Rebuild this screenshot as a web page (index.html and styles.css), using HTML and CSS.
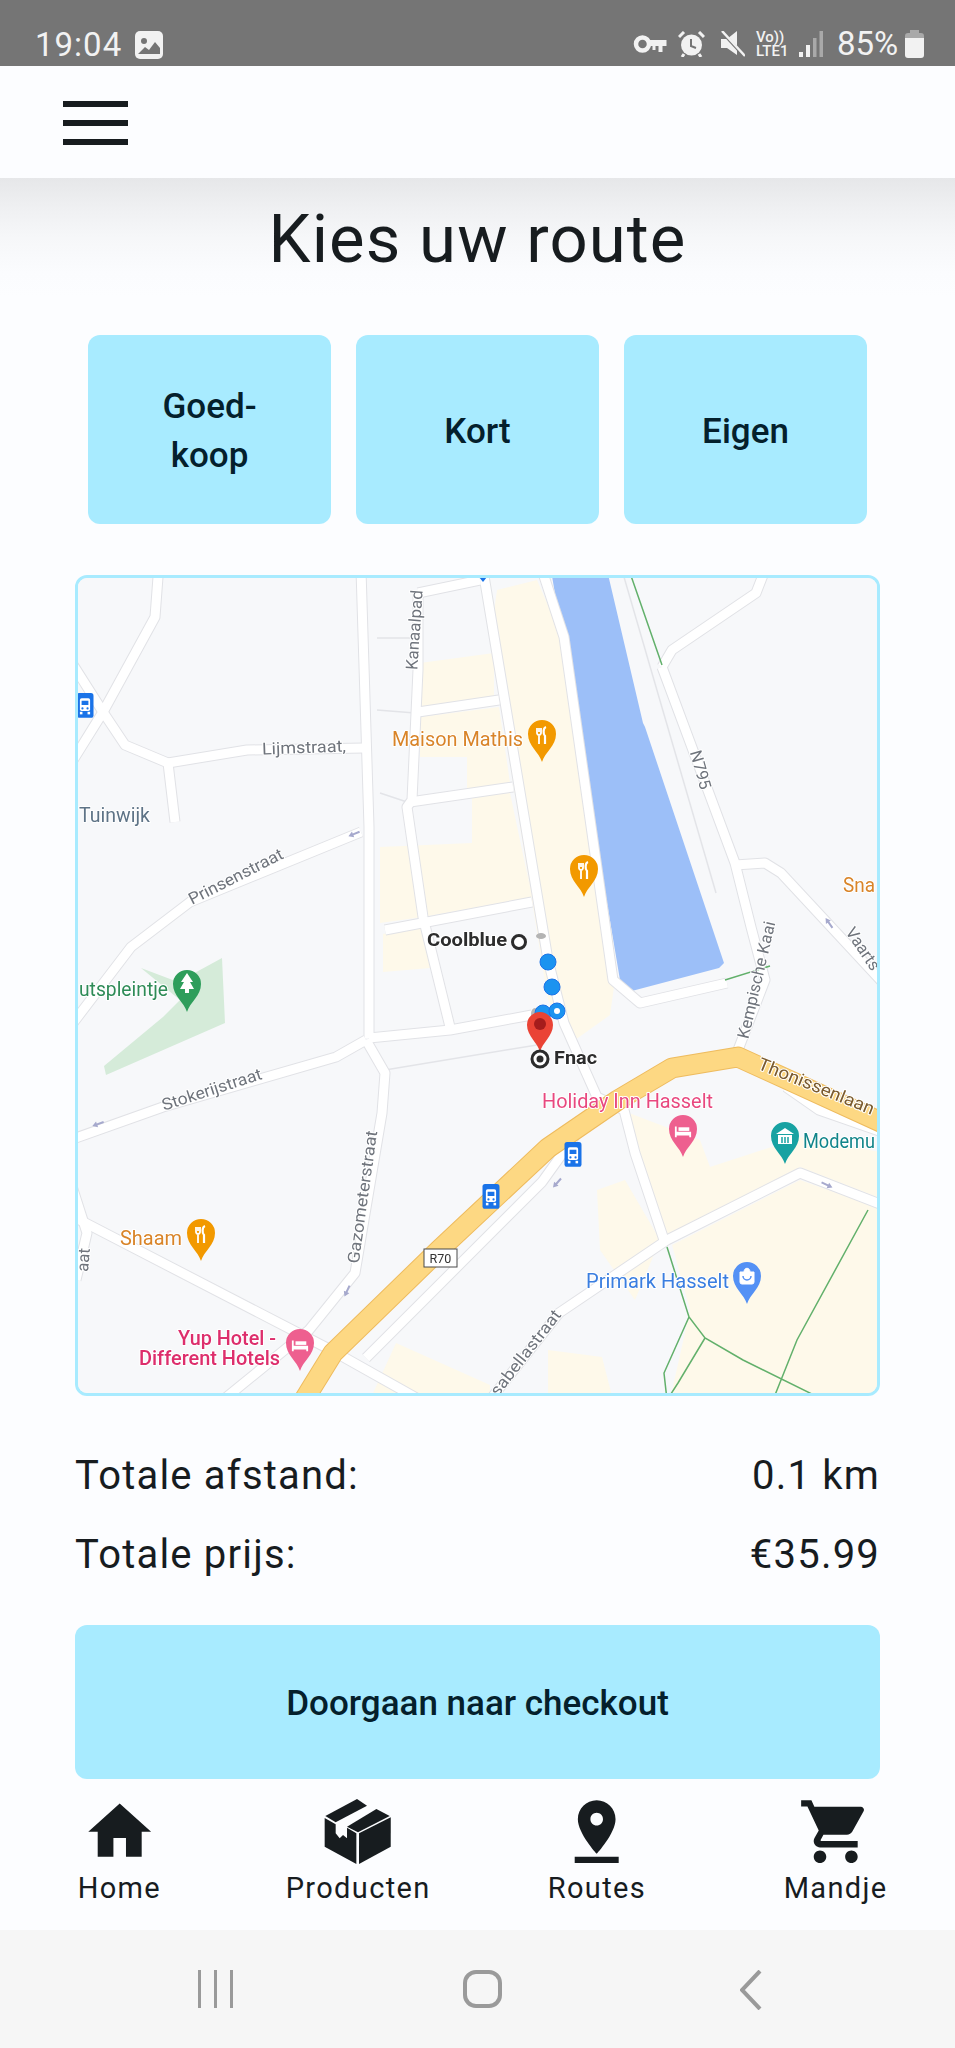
FILE: index.html
```html
<!DOCTYPE html>
<html lang="nl">
<head>
<meta charset="utf-8">
<title>Kies uw route</title>
<link rel="stylesheet" href="styles.css">
</head>
<body>
<div class="phone">
  <header class="status">
    <div class="status-left">
      <span class="clock">19:04</span>
      <svg class="st-img" viewBox="0 0 28 28"><rect width="28" height="28" rx="5" fill="#f2f2f2"/><circle cx="9" cy="10" r="3" fill="#757575"/><path d="M3 23l7-7 4 3 6-8 5 6v6z" fill="#757575"/></svg>
    </div>
    <div class="status-right">
      <svg class="st-key" viewBox="0 0 33 18"><circle cx="9" cy="9" r="6.500" fill="none" stroke="#f2f2f2" stroke-width="4.500"/><path d="M14 5h19v6h-4v6h-4v-6h-3v4h-3v-4h-5z" fill="#f2f2f2"/></svg>
      <svg class="st-alarm" viewBox="0 0 27 26"><circle cx="13.500" cy="14" r="10.500" fill="#f2f2f2"/><path d="M13 8v7l5 2" fill="none" stroke="#757575" stroke-width="2"/><path d="M1 6l5-5M26 6l-5-5M6 23l-2 3M21 23l2 3" stroke="#f2f2f2" stroke-width="3"/></svg>
      <svg class="st-mute" viewBox="0 0 25 26"><path d="M1 8h6l10-8v24l-10-7H1z" fill="#f2f2f2"/><path d="M1 0l23 25" stroke="#757575" stroke-width="3"/><path d="M2 0l23 25" stroke="#f2f2f2" stroke-width="2.500"/></svg>
      <div class="st-net"><span>Vo))</span><span>LTE1</span></div>
      <svg class="st-signal" viewBox="0 0 24 26"><rect x="0" y="21" width="4" height="5" fill="#f2f2f2"/><rect x="7" y="14" width="4" height="12" fill="#f2f2f2"/><rect x="14" y="7" width="3.500" height="19" fill="#a9a9a9"/><rect x="20.500" y="0" width="3.500" height="26" fill="#a9a9a9"/></svg>
      <span class="battery-pct">85%</span>
      <svg class="st-batt" viewBox="0 0 19 28"><path d="M5 0h9v3h2a3 3 0 013 3v3H0V6a3 3 0 013-3h2z" fill="#a9a9a9"/><path d="M0 8h19v17a3 3 0 01-3 3H3a3 3 0 01-3-3z" fill="#f2f2f2"/></svg>
    </div>
  </header>

  <div class="appbar">
    <button class="menu" aria-label="Menu"><i></i><i></i><i></i></button>
  </div>

  <main class="content">
    <h1 class="title">Kies uw route</h1>

    <div class="choices">
      <button class="choice">Goed-<br>koop</button>
      <button class="choice">Kort</button>
      <button class="choice">Eigen</button>
    </div>

    <div class="map">
      <svg class="map-svg" viewBox="78 578 799 815" preserveAspectRatio="none">
        <defs>
          <path id="pin" d="M0 42C-3 32-14 26-14 14A14 14 0 1 1 14 14C14 26 3 32 0 42Z"/>
          <g id="fork" fill="none" stroke="#fff" stroke-width="1.800"><path d="M-4-5v5a2 2 0 002 2v9M-2-5v4M0-5v5a2 2 0 01-2 2"/><path d="M5-6c-3 1-3 7-1 9v8" stroke-width="2.200"/></g>
          <g id="bed" fill="#fff"><path d="M-9 8V-4h2v6H9v6H7V6H-7v2z"/><rect x="-5" y="-3" width="12" height="4"/></g>
          <g id="bus"><rect x="-10" y="-14" width="20" height="29" rx="3" fill="#1a73e8"/><rect x="-6" y="-8" width="12" height="15" rx="2" fill="#fff"/><rect x="-4" y="-5" width="8" height="5" fill="#1a73e8"/><circle cx="-3" cy="4" r="1.300" fill="#1a73e8"/><circle cx="3" cy="4" r="1.300" fill="#1a73e8"/><rect x="-6" y="8" width="3" height="3" fill="#fff"/><rect x="3" y="8" width="3" height="3" fill="#fff"/></g>
          <path id="arr" d="M-6 0l5-3v2h7v2h-7v2z" fill="#a6a9cd"/>
          <g id="roads">
            <path d="M158 577L155 617L103 712L70 765"/>
            <path d="M70 660L103 712L125 745L168 763L175 822"/>
            <path d="M168 763L247 750L364 748"/>
            <path d="M361 570L369 827L369 1038"/>
            <path d="M361 832L190 902L131 947L70 1027"/>
            <path d="M418 593L418 670L412 800L407 807L423 917L450 1027"/>
            <path d="M418 593L480 580"/>
            <path d="M418 712L499 700"/>
            <path d="M410 802L513 787"/>
            <path d="M385 930L532 902"/>
            <path d="M483 570L548 960L564 1023L597 1097L624 1110L635 1153L664 1240"/>
            <path d="M542 570L564 637L613 980L640 1003L727 983"/>
            <path d="M662 667L735 863L751 927L765 980L738 1050"/>
            <path d="M765 570L756 593L672 650L662 667"/>
            <path d="M735 865L765 863L781 873L885 985"/>
            <path d="M369 1038L450 1030L532 1015"/>
            <path d="M70 1140L163 1107L336 1057L366 1040"/>
            <path d="M366 1040L385 1073L382 1113L355 1273L309 1330L223 1400"/>
            <path d="M70 1215L331 1350L420 1400"/>
            <path d="M70 1180L87 1233L76 1280"/>
            <path d="M366 1358L542 1182L575 1136"/>
            <path d="M490 1400L559 1313L667 1240L800 1173L885 1206"/>
            <path d="M786 1087L819 1110L885 1133"/>
          </g>
        </defs>

        <rect class="m-land" x="70" y="570" width="820" height="830"/>

        <path class="m-built" d="M497 590L537 580L563 640L615 980L610 1015L575 1040L548 1000L490 640Z"/>
        <path class="m-built" d="M420 663L494 653L494 697L420 707Z"/>
        <path class="m-built" d="M420 717L499 707L510 783L467 790L467 757L420 757Z"/>
        <path class="m-built" d="M380 847L472 843L472 795L510 793L532 897L423 917L380 923Z"/>
        <path class="m-built" d="M383 934L425 925L430 968L383 972Z"/>
        <path class="m-built" d="M629 1113L700 1140L710 1167L802 1137L885 1153L885 1200L800 1167L664 1237L634 1153Z"/>
        <path class="m-built" d="M672 1245L800 1180L885 1210L885 1400L670 1400L690 1310Z"/>
        <path class="m-built" d="M597 1190L625 1180L660 1240L635 1300L600 1250Z"/>
        <path class="m-built" d="M396 1343L490 1385L490 1400L370 1400Z"/>
        <path class="m-built" d="M548 1350L602 1357L613 1400L548 1400Z"/>
        <path class="m-park" d="M141 968L178 982L222 958L225 1023L106 1075L104 1066L163 1017L180 1000Z"/>
        <path class="m-water" d="M551 570L607 570L643 723L645 727L724 963L719 968L628 992L620 980Z"/>

        <path class="m-rail" d="M624 577L716 893"/>
        <path class="m-rail" d="M385 1070L537 1045"/>
        <path class="m-rail" d="M380 793L407 802M377 638L418 638M377 710L415 713"/>

        <use href="#roads" class="m-case"/>
        <use href="#roads" class="m-road"/>

        <path class="m-hw-case" d="M304 1400L333 1353L439 1250L548 1148L618 1100L672 1068L738 1057L885 1124"/>
        <path class="m-hw" d="M304 1400L333 1353L439 1250L548 1148L618 1100L672 1068L738 1057L885 1124"/>

        <path class="m-green" d="M629 570L662 665M725 980L770 966M667 1247L689 1317L705 1338L743 1360L824 1400M689 1317L664 1373L667 1400M705 1338L678 1383L667 1400M868 1210L797 1340L773 1400"/>

        <use href="#arr" transform="translate(354 834) rotate(-22)"/>
        <use href="#arr" transform="translate(98 1124) rotate(-20)"/>
        <use href="#arr" transform="translate(557 1183) rotate(-48)"/>
        <use href="#arr" transform="translate(347 1291) rotate(-65)"/>
        <use href="#arr" transform="translate(827 1185) rotate(205)"/>
        <use href="#arr" transform="translate(829 923) rotate(55)"/>

        <text class="t-road" x="415" y="635" text-anchor="middle" transform="rotate(-86 415 630)" textLength="80" lengthAdjust="spacingAndGlyphs">Kanaalpad</text>
        <text class="t-road" x="304" y="753" text-anchor="middle" textLength="84" lengthAdjust="spacingAndGlyphs" transform="rotate(-2 304 750)">Lijmstraat,</text>
        <text class="t-place" x="79" y="822" textLength="71" lengthAdjust="spacingAndGlyphs">Tuinwijk</text>
        <text class="t-road" x="236" y="882" text-anchor="middle" transform="rotate(-27 236 877)" textLength="104" lengthAdjust="spacingAndGlyphs">Prinsenstraat</text>
        <text class="t-road" x="700" y="775" text-anchor="middle" transform="rotate(74 700 770)">N795</text>
        <text class="t-road" x="757" y="985" text-anchor="middle" transform="rotate(-77 757 980)" textLength="120" lengthAdjust="spacingAndGlyphs">Kempische Kaai</text>
        <text class="t-road" x="845" y="932" transform="rotate(56 845 932)">Vaarts</text>
        <text class="t-road" x="212" y="1095" text-anchor="middle" transform="rotate(-18 212 1090)" textLength="104" lengthAdjust="spacingAndGlyphs">Stokerijstraat</text>
        <text class="t-road" x="363" y="1202" text-anchor="middle" transform="rotate(-82 363 1197)" textLength="134" lengthAdjust="spacingAndGlyphs">Gazometerstraat</text>
        <text class="t-road" x="526" y="1358" text-anchor="middle" transform="rotate(-52 526 1353)" textLength="104" lengthAdjust="spacingAndGlyphs">sabellastraat</text>
        <text class="t-road" x="88" y="1272" transform="rotate(-85 88 1272)">aat</text>
        <text class="t-hw" x="816" y="1092" text-anchor="middle" transform="rotate(22 816 1087)" textLength="124" lengthAdjust="spacingAndGlyphs">Thonissenlaan</text>

        <g class="shield"><rect x="424" y="1249" width="33" height="18"/><text x="440.500" y="1263" text-anchor="middle">R70</text></g>

        <text class="t-poi c-food" x="392" y="746" textLength="131" lengthAdjust="spacingAndGlyphs">Maison Mathis</text>
        <use href="#pin" class="f-food" transform="translate(542 720)"/><use href="#fork" transform="translate(541 733)"/>
        <use href="#pin" class="f-food" transform="translate(584 855)"/><use href="#fork" transform="translate(583 868)"/>
        <text class="t-poi c-food" x="843" y="892" textLength="32" lengthAdjust="spacingAndGlyphs">Sna</text>
        <text class="t-poi c-food" x="120" y="1245" textLength="62" lengthAdjust="spacingAndGlyphs">Shaam</text>
        <use href="#pin" class="f-food" transform="translate(201 1219)"/><use href="#fork" transform="translate(200 1232)"/>
        <text class="t-poi c-park" x="79" y="996" textLength="89" lengthAdjust="spacingAndGlyphs">utspleintje</text>
        <use href="#pin" class="f-park" transform="translate(187 970)"/>
        <path d="M187 973l-6 9h3l-4 7h5v4h4v-4h5l-4-7h3z" fill="#fff"/>
        <text class="t-poi c-hotel" x="542" y="1108" textLength="171" lengthAdjust="spacingAndGlyphs">Holiday Inn Hasselt</text>
        <use href="#pin" class="f-hotel" transform="translate(683 1115)"/><use href="#bed" transform="translate(683 1130) scale(.9)"/>
        <text class="t-poi c-museum" x="803" y="1148" textLength="72" lengthAdjust="spacingAndGlyphs">Modemu</text>
        <use href="#pin" class="f-museum" transform="translate(785 1122)"/>
        <path d="M776 1134l9-6 9 6zM778 1135h14v9h-14z" fill="#fff"/><path d="M782 1137v6M785 1137v6M788 1137v6" stroke="#17a2a2" stroke-width="1.500"/>
        <text class="t-poi c-shop" x="586" y="1288" textLength="143" lengthAdjust="spacingAndGlyphs">Primark Hasselt</text>
        <use href="#pin" class="f-shop" transform="translate(747 1262)"/>
        <path d="M740 1272h14v10a2 2 0 01-2 2h-10a2 2 0 01-2-2zM744 1272c0-5 6-5 6 0" fill="#fff" stroke="#fff" stroke-width="1"/><path d="M743 1276a4 4 0 008 0" fill="none" stroke="#5491f5" stroke-width="1.500"/>
        <text class="t-poi c-yup" x="276" y="1345" text-anchor="end" textLength="98" lengthAdjust="spacingAndGlyphs">Yup Hotel -</text>
        <text class="t-poi c-yup" x="280" y="1365" text-anchor="end" textLength="141" lengthAdjust="spacingAndGlyphs">Different Hotels</text>
        <use href="#pin" class="f-hotel" transform="translate(300 1329)"/><use href="#bed" transform="translate(300 1344) scale(.9)"/>

        <use href="#bus" transform="translate(85 705) scale(.85)"/>
        <use href="#bus" transform="translate(573 1154) scale(.85)"/>
        <use href="#bus" transform="translate(491 1196) scale(.85)"/>
        <path d="M479 577h8l-4 5z" fill="#1a73e8"/>

        <text class="t-bold" x="427" y="946" textLength="80" lengthAdjust="spacingAndGlyphs">Coolblue</text>
        <circle class="m-ring" cx="519" cy="942" r="6.500"/>
        <ellipse cx="541" cy="936" rx="5" ry="3" fill="#b4b4b4"/>
        <ellipse cx="535" cy="1014" rx="4" ry="6" fill="#b4b4b4"/>
        <circle class="m-dot" cx="548" cy="962" r="8"/>
        <circle class="m-dot" cx="552" cy="987" r="8"/>
        <circle class="m-dot" cx="543" cy="1013" r="8"/>
        <circle class="m-dot" cx="557" cy="1011" r="8"/>
        <circle cx="557" cy="1011" r="3" fill="#fff"/>
        <path d="M540 1052C538 1043 527 1036 527 1025A13 13 0 1 1 553 1025C553 1036 542 1043 540 1052Z" fill="#ea4335"/>
        <circle cx="540" cy="1024" r="6" fill="#a51c1c"/>
        <circle class="m-ring" cx="540" cy="1059" r="8"/>
        <circle cx="540" cy="1059" r="3.500" fill="#2c2c2c"/>
        <text class="t-bold" x="554" y="1064" textLength="43" lengthAdjust="spacingAndGlyphs">Fnac</text>
      </svg>
    </div>

    <dl class="totals">
      <div class="total-row"><dt>Totale afstand:</dt><dd>0.1 km</dd></div>
      <div class="total-row"><dt>Totale prijs:</dt><dd>€35.99</dd></div>
    </dl>

    <button class="checkout">Doorgaan naar checkout</button>
  </main>

  <nav class="tabs">
    <a class="tab">
      <svg class="tab-icon" viewBox="0 0 24 24"><path d="M10 20v-6h4v6h5v-8h3L12 3 2 12h3v8z"/></svg>
      <span>Home</span>
    </a>
    <a class="tab">
      <svg class="tab-icon" viewBox="31 12 226 226"><path d="M47 78L142 27L172 47L78 97Z"/><path d="M112 110L200 57L240 78L145 127Z"/><path d="M45 84L78 103V130L90 145L100 135L112 145V113L140 130V222L45 170Z"/><path d="M148 130L243 82V170L148 222Z"/></svg>
      <span>Producten</span>
    </a>
    <a class="tab">
      <svg class="tab-icon" viewBox="0 0 24 24"><path d="M18 8c0-3.310-2.690-6-6-6S6 4.690 6 8c0 4.500 6 11 6 11s6-6.500 6-11zm-8 0c0-1.100.9-2 2-2s2 .9 2 2-.89 2-2 2c-1.100 0-2-.9-2-2zM5 20v2h14v-2H5z"/></svg>
      <span>Routes</span>
    </a>
    <a class="tab">
      <svg class="tab-icon" viewBox="0 0 24 24"><path d="M7 18c-1.100 0-1.990.9-1.990 2S5.900 22 7 22s2-.9 2-2-.9-2-2-2zM1 2v2h2l3.600 7.590-1.350 2.450c-.16.28-.25.61-.25.96 0 1.100.9 2 2 2h12v-2H7.420c-.14 0-.25-.11-.25-.25l.03-.12.9-1.630h7.450c.75 0 1.410-.41 1.750-1.030l3.580-6.470c.08-.14.12-.31.12-.48 0-.55-.45-1-1-1H5.210l-.94-2H1zm16 16c-1.100 0-1.990.9-1.990 2s.89 2 1.990 2 2-.9 2-2-.9-2-2-2z"/></svg>
      <span>Mandje</span>
    </a>
  </nav>

  <footer class="sysnav">
    <svg class="sys-recent" viewBox="0 0 35 38"><path d="M1.500 0v38M17.500 0v38M33.500 0v38"/></svg>
    <svg class="sys-home" viewBox="0 0 39 38"><rect x="2" y="2" width="35" height="34" rx="11"/></svg>
    <svg class="sys-back" viewBox="0 0 22 40"><path d="M20 1L2 20l18 19"/></svg>
  </footer>
</div>
</body>
</html>
```
FILE: styles.css
```css
* { box-sizing: border-box; }
html, body { margin: 0; padding: 0; }
body { background: #fcfdff; font-family: Roboto, "Liberation Sans", sans-serif; color: #171c1f; }
.phone { width: 955px; height: 2048px; display: flex; flex-direction: column; overflow: hidden; }

.status { height: 66px; flex: none; background: #757575; display: flex; justify-content: space-between; align-items: flex-start; color: #f2f2f2; }
.status-left { display: flex; align-items: center; padding: 24px 0 0 35px; gap: 13px; height: 66px; }
.clock { font-size: 33px; font-weight: 400; line-height: 38px; letter-spacing: 1px; }
.st-img { width: 28px; height: 28px; }
.status-right { display: flex; align-items: center; height: 66px; padding: 22px 31px 0 0; }
.st-key { width: 34px; height: 18px; margin-right: 11px; }
.st-alarm { width: 27px; height: 26px; margin-right: 15px; }
.st-mute { width: 25px; height: 26px; margin-right: 11px; }
.st-net { width: 34px; display: flex; flex-direction: column; font-size: 15px; line-height: 14px; font-weight: 500; text-align: left; margin-right: 9px; }
.st-signal { width: 24px; height: 26px; margin-right: 14px; }
.battery-pct { font-size: 33px; font-weight: 400; line-height: 38px; width: 64px; }
.st-batt { width: 19px; height: 28px; margin-left: 4px; }

.appbar { height: 112px; flex: none; background: #fcfdff; padding: 35px 0 0 63px; }
.menu { display: flex; flex-direction: column; gap: 13px; width: 65px; padding: 0; border: 0; background: none; }
.menu i { display: block; width: 65px; height: 6px; background: #171c1f; }

.content { flex: 1; padding: 0 75px; background: linear-gradient(#e6e7e9 0, #eff0f2 30px, #f6f7f9 60px, #fbfcfe 95px, #fcfdff 120px, #fcfdff 100%); display: flex; flex-direction: column; }
.title { margin: 0; height: 157px; padding-top: 21px; font-size: 67px; line-height: 80px; font-weight: 400; letter-spacing: 1.100px; text-align: center; color: #171c1f; }

.choices { display: grid; grid-template-columns: repeat(3, 243px); gap: 25px; padding: 0 13px; height: 189px; }
.choice, .checkout { border: 0; background: #a8ebff; border-radius: 12px; font-family: inherit; font-weight: 500; color: #04202c; }
.choice { font-size: 35px; line-height: 49px; padding: 3px 0 0; }

.map { margin-top: 51px; height: 821px; border: 3px solid #a8ebff; border-radius: 12px; overflow: hidden; flex: none; background: #f7f8fa; }
.map-svg { display: block; width: 100%; height: 100%; filter: blur(.5px); }
.m-land { fill: #f7f8fa; }
.m-built { fill: #fef9ea; }
.m-park { fill: #d5ebd9; }
.m-water { fill: #9cbff8; }
.m-rail { fill: none; stroke: #e3e4e8; stroke-width: 1.500; }
.m-case { fill: none; stroke: #e1e2e6; stroke-width: 11; stroke-linejoin: round; }
.m-road { fill: none; stroke: #fff; stroke-width: 9; stroke-linejoin: round; }
.m-hw-case { fill: none; stroke: #eebb5e; stroke-width: 21; stroke-linejoin: round; }
.m-hw { fill: none; stroke: #fdd883; stroke-width: 19; stroke-linejoin: round; }
.m-green { fill: none; stroke: #62b06b; stroke-width: 1.500; }
.m-ring { fill: #fff; stroke: #2c2c2c; stroke-width: 3; }
.m-dot { fill: #1b93f0; stroke: #1a73e8; stroke-width: 1; }
.map-svg text { font-family: Roboto, "Liberation Sans", sans-serif; paint-order: stroke; stroke: #fff; stroke-width: 2px; stroke-linejoin: round; }
.t-road { font-size: 16.500px; fill: #6f747c; }
.t-place { font-size: 20px; fill: #5e7386; }
.t-hw { font-size: 17.500px; fill: #7a5a2c; }
.t-poi { font-size: 20px; }
.t-bold { font-size: 19px; font-weight: 700; fill: #2c2c2c; }
.c-food { fill: #d98428; }
.c-park { fill: #2e8b57; }
.c-hotel { fill: #e8487f; }
.c-museum { fill: #11858a; }
.c-shop { fill: #3a7ee0; }
.c-yup { fill: #dd2e6c; font-weight: 500; }
.f-food { fill: #f29900; }
.f-park { fill: #2e9e5b; }
.f-hotel { fill: #ee5f8f; }
.f-museum { fill: #17a2a2; }
.f-shop { fill: #5491f5; }
.shield rect { fill: #fff; stroke: #4a4a4a; stroke-width: 1; }
.map-svg .shield text { font-size: 12.500px; fill: #333; stroke: none; }

.totals { margin: 52px 0 0; flex: none; }
.total-row { display: flex; justify-content: space-between; height: 79px; align-items: flex-start; font-size: 40px; line-height: 56px; letter-spacing: 1.200px; }
.total-row dt, .total-row dd { margin: 0; }

.checkout { display: block; flex: none; width: 805px; height: 154px; margin-top: 19px; padding: 3px 0 0; font-size: 35px; }

.tabs { height: 151px; flex: none; display: grid; grid-template-columns: repeat(4, 1fr); padding-top: 15px; }
.tab { display: flex; flex-direction: column; align-items: center; }
.tab-icon { width: 75.400px; height: 75.400px; fill: #171c1f; flex: none; }
.tab span { font-size: 29px; line-height: 36px; margin-top: 1px; letter-spacing: 1.350px; }

.sysnav { height: 118px; flex: none; background: #f6f6f6; display: grid; grid-template-columns: 198px 35px 230px 39px 238px 22px; align-items: start; padding-top: 40px; }
.sysnav svg { fill: none; stroke: #9a9a9a; grid-row: 1; }
.sys-recent { grid-column: 2; width: 35px; height: 38px; stroke-width: 3; }
.sys-home { grid-column: 4; width: 39px; height: 38px; stroke-width: 4; }
.sys-back { grid-column: 6; width: 22px; height: 40px; stroke-width: 4; }
```
